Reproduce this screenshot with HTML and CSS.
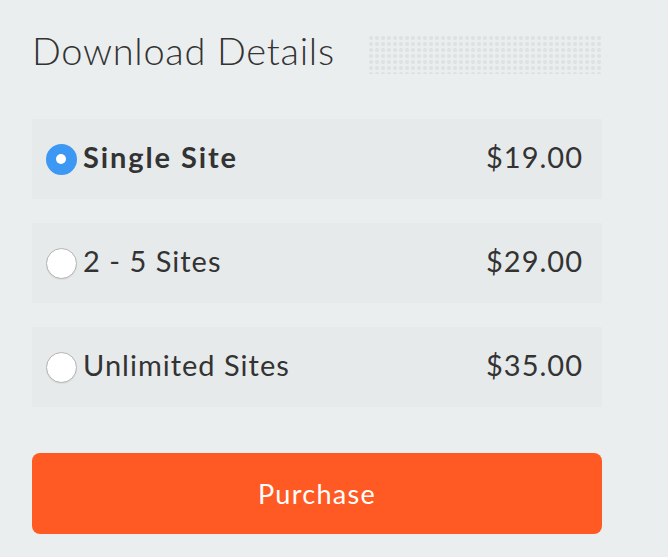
FILE: index.html
```html
<!DOCTYPE html>
<html lang="en">
<head>
<meta charset="utf-8">
<title>Download Details</title>
<link rel="stylesheet" href="styles.css">
</head>
<body>
<div class="panel">
  <div class="header">
    <h2 class="title">Download Details</h2>
    <div class="dots"></div>
  </div>
  <div class="options">
    <label class="option">
      <span class="radio checked"></span>
      <span class="name bold">Single Site</span>
      <span class="price">$19.00</span>
    </label>
    <label class="option">
      <span class="radio"></span>
      <span class="name">2 - 5 Sites</span>
      <span class="price">$29.00</span>
    </label>
    <label class="option">
      <span class="radio"></span>
      <span class="name">Unlimited Sites</span>
      <span class="price">$35.00</span>
    </label>
  </div>
  <button class="purchase">Purchase</button>
</div>
</body>
</html>
```

FILE: styles.css
```css
html, body {
  margin: 0;
  padding: 0;
  background: #ebeeef;
}
body {
  font-family: "Lato", "Open Sans", sans-serif;
  color: #333333;
}
.panel {
  width: 570px;
  padding: 27px 0 0 32px;
}
.header {
  display: flex;
  align-items: flex-start;
  height: 46px;
}
.title {
  margin: 0;
  font-size: 38px;
  line-height: 46px;
  font-weight: 300;
  letter-spacing: 0.7px;
  color: #333;
  white-space: nowrap;
}
.dots {
  margin-left: 33px;
  margin-top: 8px;
  width: 236px;
  height: 39px;
  background-image: radial-gradient(circle, #dfe2e3 1.8px, transparent 2.3px);
  background-size: 6px 6px;
  background-position: 0 0;
}
.options {
  margin-top: 46px;
  display: flex;
  flex-direction: column;
  gap: 24px;
}
.option {
  display: flex;
  align-items: center;
  height: 80px;
  box-sizing: border-box;
  background: #e7eaeb;
  padding: 0 19px 5px 14px;
}
.radio {
  flex: none;
  width: 31px;
  height: 31px;
  box-sizing: border-box;
  border-radius: 50%;
  background: #ffffff;
  border: 1px solid #b3b3b3;
  box-shadow: 0 1px 1px rgba(0,0,0,0.06);
  margin-right: 6px;
  margin-top: 5px;
}
.radio.checked {
  background: #3d98f4;
  border: 10.5px solid #3d98f4;
  box-shadow: none;
}
.radio.checked::after {
  content: "";
  display: block;
  width: 10px;
  height: 10px;
  border-radius: 50%;
  background: #fff;
}
.name {
  flex: 1;
  font-size: 29px;
  letter-spacing: 1px;
  font-weight: 400;
}
.name.bold {
  font-weight: 700;
  letter-spacing: 1.9px;
}
.price {
  font-size: 29px;
  letter-spacing: 1px;
}
.purchase {
  display: block;
  margin-top: 46px;
  width: 570px;
  height: 81px;
  border: none;
  border-radius: 8px;
  background: #ff5a24;
  color: #ffffff;
  font-family: "Lato", "Open Sans", sans-serif;
  font-size: 27px;
  letter-spacing: 1.3px;
  font-weight: 400;
}
```
